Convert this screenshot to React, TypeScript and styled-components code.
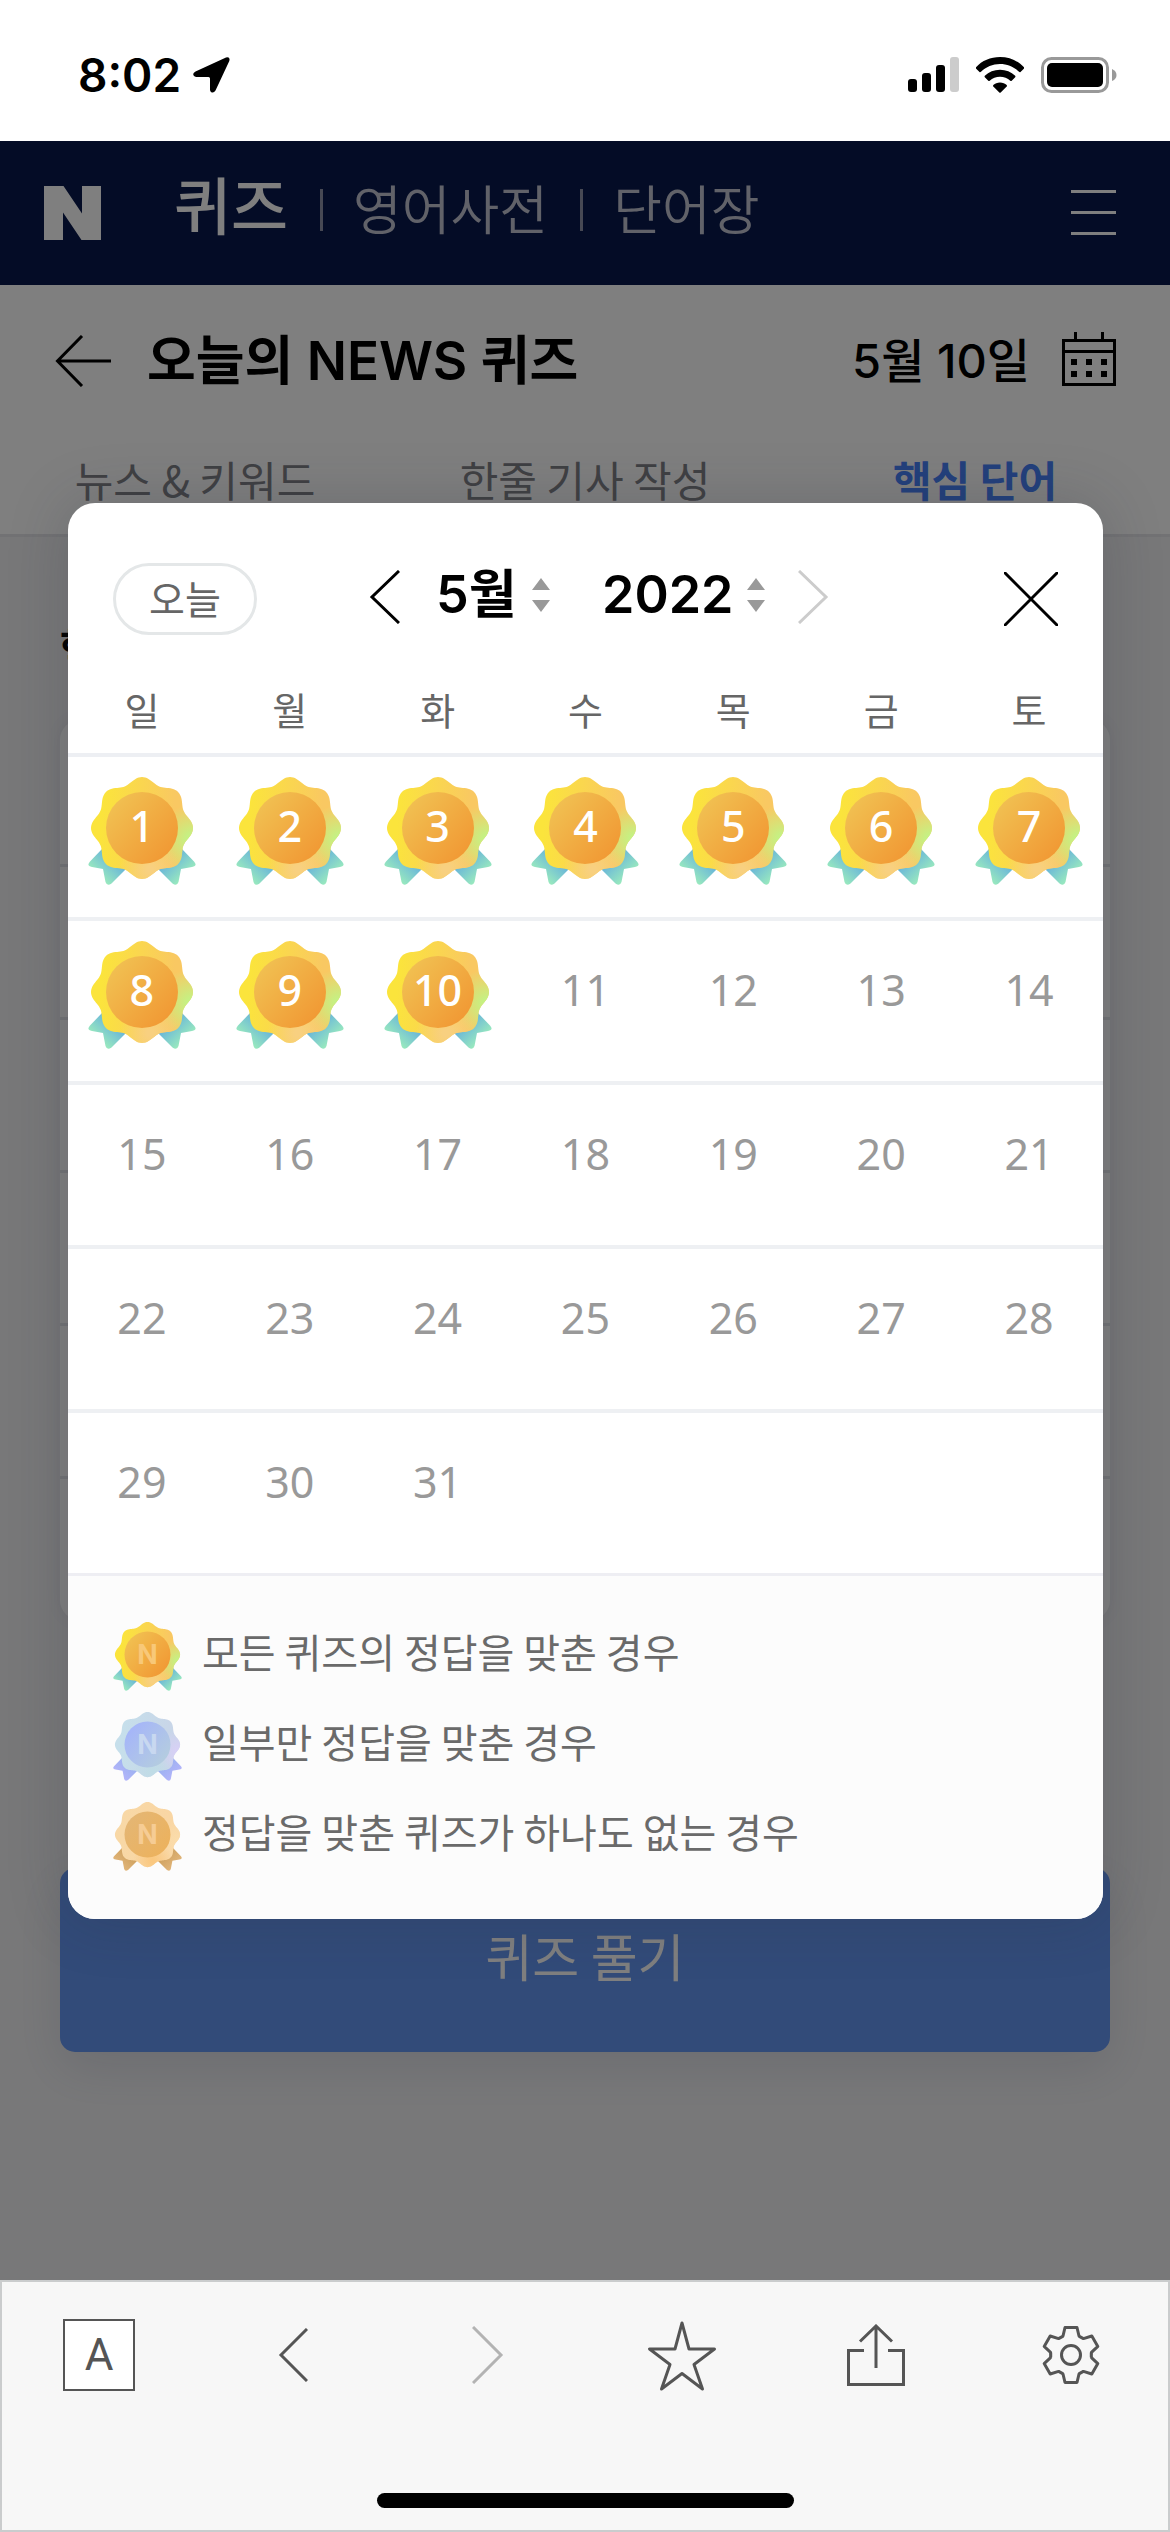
import React, { useId } from "react";
import styled, { createGlobalStyle } from "styled-components";

const GlobalStyle = createGlobalStyle`
  * { box-sizing: border-box; }
  body {
    margin: 0;
    background: #f7f7f7;
    font-family: Inter, "Noto Sans CJK KR", sans-serif;
    color: #000;
  }
  button, select {
    font: inherit;
    color: inherit;
    background: none;
    border: 0;
    margin: 0;
    padding: 0;
    cursor: pointer;
  }
  a { color: inherit; text-decoration: none; }
  svg { display: block; }
`;

const Screen = styled.div`
  display: flex;
  flex-direction: column;
  min-height: 100vh;
`;

/* ---------- status bar ---------- */

const StatusBar = styled.div`
  display: flex;
  align-items: center;
  justify-content: space-between;
  height: 141px;
  padding: 8px 53px 0 78px;
  background: #fff;
`;

const Clock = styled.div`
  display: flex;
  align-items: center;
  gap: 12px;
  font-size: 46px;
  line-height: 56px;
  font-weight: 600;
`;

const StatusIcons = styled.div`
  display: flex;
  align-items: center;
  gap: 17px;
`;

/* ---------- web page ---------- */

const WebView = styled.div`
  position: relative;
  flex: 1;
  display: flex;
  flex-direction: column;
  background: #f1f1f3;
`;

const SiteHeader = styled.header`
  display: flex;
  align-items: center;
  height: 144px;
  padding: 0 54px 0 44px;
  background: #09194c;
  color: #fff;
`;

const SiteNav = styled.nav`
  display: flex;
  align-items: center;
  flex: 1;
  padding-left: 73px;
  padding-bottom: 6px;
  font-family: "Noto Sans CJK KR", sans-serif;
`;

const NavLink = styled.a<{ $current?: boolean }>`
  font-size: ${(p) => (p.$current ? 62 : 53)}px;
  line-height: 76px;
  font-weight: ${(p) => (p.$current ? 500 : 350)};
  color: ${(p) => (p.$current ? "#fff" : "#c2c4d2")};
  padding-bottom: ${(p) => (p.$current ? 14 : 6)}px;
`;

const NavDivider = styled.span`
  width: 3px;
  height: 42px;
  margin: 0 30px 0 32px;
  background: #8f93a8;
`;

const TitleBar = styled.div`
  display: flex;
  align-items: center;
  gap: 36px;
  height: 152px;
  padding: 0 54px 0 55px;
  background: #fff;
`;

const PageTitle = styled.h1`
  flex: 1;
  margin: 0;
  font-size: 53px;
  line-height: 64px;
  font-weight: 600;
`;

const DateButton = styled.button`
  display: flex;
  align-items: center;
  gap: 32px;
  font-size: 47px;
  line-height: 64px;
  font-weight: 500;
`;

const Tabs = styled.nav`
  display: grid;
  grid-template-columns: repeat(3, 1fr);
  height: 100px;
  padding-top: 12px;
  background: #fff;
  border-bottom: 3px solid #e4e5e8;
  font-family: "Noto Sans CJK KR", sans-serif;
`;

const Tab = styled.a<{ $current?: boolean }>`
  font-size: 42px;
  line-height: 60px;
  text-align: center;
  font-weight: ${(p) => (p.$current ? 700 : 400)};
  color: ${(p) => (p.$current ? "#4680f8" : "#7e8086")};
`;

const PageBody = styled.main`
  flex: 1;
  padding: 82px 60px 0;
`;

const SectionTitle = styled.h2`
  margin: 0 0 41px;
  font-size: 42px;
  line-height: 60px;
  font-weight: 700;
`;

const WordCard = styled.ul`
  list-style: none;
  margin: 0 0 248px;
  padding: 0;
  background: #fff;
  border-radius: 20px;
  box-shadow: 0 0 20px rgba(60, 70, 110, 0.08);
`;

const WordRow = styled.li`
  height: 153px;
  border-bottom: 3px solid #e4e6ea;
  &:first-child { height: 147px; }
  &:last-child { height: 141px; border-bottom: 0; }
`;

const StartButton = styled.button`
  width: 100%;
  height: 184px;
  border-radius: 15px;
  background: #6496f2;
  color: #fff;
  font-family: "Noto Sans CJK KR", sans-serif;
  font-size: 51px;
  font-weight: 400;
  line-height: 64px;
  padding-bottom: 10px;
  box-shadow: 0 16px 50px rgba(40, 60, 110, 0.12);
`;

/* ---------- calendar dialog ---------- */

const Overlay = styled.div`
  position: absolute;
  inset: 0;
  display: flex;
  align-items: center;
  padding: 0 67px 0 68px;
  background: rgba(0, 0, 0, 0.5);
`;

const Dialog = styled.section`
  flex: 1;
  overflow: hidden;
  border-radius: 27px;
  background: #fff;
  box-shadow: 0 0 60px rgba(40, 44, 60, 0.22);
`;

const DialogHeader = styled.div`
  display: flex;
  align-items: center;
  padding: 60px 45px 32px;
`;

const TodayButton = styled.button`
  width: 144px;
  height: 72px;
  border: 3px solid #e4e7e8;
  border-radius: 36px;
  padding-bottom: 4px;
  font-family: "Noto Sans CJK KR", sans-serif;
  font-size: 39px;
  line-height: 60px;
  color: #666;
`;

const MonthNav = styled.div`
  display: flex;
  align-items: center;
  flex: 1;
  padding-left: 112px;
  padding-bottom: 4px;
`;

const Picker = styled.label<{ $wide?: boolean }>`
  display: flex;
  align-items: center;
  padding-bottom: 4px;
  margin-left: ${(p) => (p.$wide ? 52 : 36)}px;
  margin-right: ${(p) => (p.$wide ? 33 : 0)}px;
  select {
    appearance: none;
    width: ${(p) => (p.$wide ? 145 : 96)}px;
    font-size: 52px;
    line-height: 64px;
    height: 64px;
    font-weight: 600;
  }
`;

const Calendar = styled.table`
  width: 100%;
  table-layout: fixed;
  border-collapse: separate;
  border-spacing: 0;
  font-family: "Noto Sans CJK KR", sans-serif;
`;

const Weekday = styled.th`
  height: 90px;
  padding: 0 0 2px;
  border-bottom: 4px solid #edeff3;
  font-size: 38px;
  line-height: 60px;
  font-weight: 400;
  color: #666;
`;

const DayCell = styled.td<{ $last?: boolean }>`
  height: ${(p) => (p.$last ? 160 : 164)}px;
  padding: 20px 0 0;
  vertical-align: top;
  border-bottom: ${(p) => (p.$last ? "0" : "4px solid #eef0f3")};
`;

const DayButton = styled.button<{ $done?: boolean }>`
  display: grid;
  width: 108px;
  height: 108px;
  margin: 0 auto;
  font-family: "Noto Sans", sans-serif;
  font-size: 43px;
  line-height: 98px;
  color: ${(p) => (p.$done ? "#fff" : "#999")};
  font-weight: ${(p) => (p.$done ? 500 : 400)};
  > * { grid-area: 1 / 1; }
  > span { z-index: 1; }
`;

const Legend = styled.ul`
  display: grid;
  gap: 21px;
  list-style: none;
  margin: 0;
  padding: 46px 45px 48px;
  background: #fcfcfc;
  border-top: 3px solid #eeeef3;
  font-family: "Noto Sans CJK KR", sans-serif;
`;

const LegendItem = styled.li`
  display: flex;
  align-items: center;
  gap: 20px;
  height: 69px;
  font-size: 40px;
  line-height: 60px;
  color: #6a6a6a;
  span { padding-bottom: 10px; }
`;

/* ---------- browser toolbar ---------- */

const Toolbar = styled.footer`
  display: flex;
  flex-direction: column;
  align-items: center;
  height: 252px;
  border: 2px solid #cacccd;
  background: #f7f7f7;
`;

const Tools = styled.div`
  display: grid;
  grid-template-columns: repeat(6, 1fr);
  align-items: center;
  width: 100%;
  height: 146px;
  color: #555;
`;

const Tool = styled.button`
  display: flex;
  align-items: center;
  justify-content: center;
  height: 146px;
  &:disabled { color: #b3b3b3; }
`;

const LetterBox = styled.span`
  width: 72px;
  height: 72px;
  border: 2px solid #555;
  background: #fff;
  font-family: Roboto, sans-serif;
  font-size: 44px;
  line-height: 68px;
`;

const HomeIndicator = styled.div`
  width: 417px;
  height: 15px;
  margin: auto 0 22px;
  border-radius: 8px;
  background: #000;
`;

/* ---------- medal drawing ---------- */

type Palette = {
  left: string;
  right: string;
  glow: string;
  base: string;
  inner: [string, string];
  ribbon: [string, string];
  mark: string;
};

const gold: Palette = {
  left: "#fbe43c",
  right: "#f9c862",
  glow: "#c4f284",
  base: "#f8d080",
  inner: ["#f1c152", "#f19a35"],
  ribbon: ["#68b4da", "#98e8bf"],
  mark: "#f8c878",
};

const blue: Palette = {
  left: "#c6dfeb",
  right: "#c8d6e8",
  glow: "#d8d0f6",
  base: "#c0dce6",
  inner: ["#a4b4fa", "#b4cce0"],
  ribbon: ["#9cb2f0", "#b2b4fa"],
  mark: "#c8d8f0",
};

const bronze: Palette = {
  left: "#f8d8a6",
  right: "#f9d6a4",
  glow: "#fbdcaa",
  base: "#fac880",
  inner: ["#e4b674", "#ecb25e"],
  ribbon: ["#cfa260", "#e0b478"],
  mark: "#f6cc94",
};

const scallop = (() => {
  const points: string[] = [];
  for (let i = 0; i < 192; i++) {
    const a = (i / 192) * Math.PI * 2;
    const r = 48 + 3 * Math.cos(8 * a);
    points.push(`${(54 + r * Math.sin(a)).toFixed(2)} ${(51 - r * Math.cos(a)).toFixed(2)}`);
  }
  return `M${points.join("L")}Z`;
})();

const ribbon = "M14 72L2 84.500Q-2 89 4 90L15 92L17.500 105Q19 109.500 23.500 106.500L42 88Z";

function Medal({ size, palette, mark }: { size: number; palette: Palette; mark?: boolean }) {
  const id = useId().replace(/[^a-zA-Z0-9]/g, "");
  return (
    <svg width={size} height={size} viewBox="0 0 108 108" aria-hidden="true">
      <defs>
        <linearGradient id={`${id}a`} x1="0" y1="0.4" x2="1" y2="0.5">
          <stop offset="0.1" stopColor={palette.left} />
          <stop offset="0.8" stopColor={palette.right} />
        </linearGradient>
        <radialGradient id={`${id}b`} gradientUnits="userSpaceOnUse" cx="103" cy="62" r="34">
          <stop offset="0.1" stopColor={palette.glow} />
          <stop offset="1" stopColor={palette.glow} stopOpacity="0" />
        </radialGradient>
        <radialGradient id={`${id}c`} gradientUnits="userSpaceOnUse" cx="62" cy="92" r="30">
          <stop offset="0.1" stopColor={palette.base} />
          <stop offset="1" stopColor={palette.base} stopOpacity="0" />
        </radialGradient>
        <linearGradient id={`${id}d`} x1="0.1" y1="0.1" x2="0.9" y2="0.8">
          <stop offset="0" stopColor={palette.inner[0]} />
          <stop offset="1" stopColor={palette.inner[1]} />
        </linearGradient>
        <linearGradient id={`${id}e`} gradientUnits="userSpaceOnUse" x1="25" y1="80" x2="9" y2="97">
          <stop offset="0" stopColor={palette.ribbon[0]} />
          <stop offset="1" stopColor={palette.ribbon[1]} />
        </linearGradient>
      </defs>
      <path d={ribbon} fill={`url(#${id}e)`} />
      <path d={ribbon} fill={`url(#${id}e)`} transform="translate(108 0) scale(-1 1)" />
      <path d={scallop} fill={`url(#${id}a)`} />
      <path d={scallop} fill={`url(#${id}b)`} />
      <path d={scallop} fill={`url(#${id}c)`} />
      <circle cx="54" cy="51" r="36" fill={`url(#${id}d)`} />
      {mark && (
        <text
          x="54"
          y="66"
          textAnchor="middle"
          fontFamily="Inter, sans-serif"
          fontWeight="700"
          fontSize="42"
          fill={palette.mark}
        >
          N
        </text>
      )}
    </svg>
  );
}

/* ---------- icons ---------- */

const Chevron = ({ w, h, flip }: { w: number; h: number; flip?: boolean }) => (
  <svg width={w} height={h} fill="none" stroke="currentColor" strokeWidth="3" aria-hidden="true">
    <path d={flip ? `M1 1L${w - 3} ${h / 2}L1 ${h - 1}` : `M${w - 1} 1L3 ${h / 2}L${w - 1} ${h - 1}`} />
  </svg>
);

const Stepper = () => (
  <svg width="18" height="34" viewBox="0 0 18 34" fill="#999" aria-hidden="true">
    <path d="M9 0L18 12H0ZM9 34L18 22H0Z" />
  </svg>
);

const gearPath = (() => {
  const tooth: [number, number][] = [
    [-12, -16.5],
    [-8, -19],
    [-6, -27.5],
    [6, -27.5],
    [8, -19],
    [12, -16.5],
  ];
  const points: string[] = [];
  for (let k = 0; k < 6; k++) {
    const t = (k * Math.PI) / 3;
    const cos = Math.cos(t);
    const sin = Math.sin(t);
    tooth.forEach(([x, y]) => {
      points.push(`${(29 + x * cos - y * sin).toFixed(2)} ${(29 + x * sin + y * cos).toFixed(2)}`);
    });
  }
  return `M${points.join("L")}Z`;
})();

const NextMonthButton = styled.button`
  &:disabled { color: #ccc; cursor: default; }
`;

/* ---------- data ---------- */

const weekdays = ["일", "월", "화", "수", "목", "금", "토"];
const weeks = [0, 1, 2, 3, 4].map((w) => weekdays.map((_, d) => w * 7 + d + 1));
const lastDay = 31;
const today = 10;

const legend: [Palette, string][] = [
  [gold, "모든 퀴즈의 정답을 맞춘 경우"],
  [blue, "일부만 정답을 맞춘 경우"],
  [bronze, "정답을 맞춘 퀴즈가 하나도 없는 경우"],
];

export default function App() {
  return (
    <Screen>
      <GlobalStyle />
      <StatusBar>
        <Clock>
          8:02
          <svg width="37" height="36" viewBox="0 0 37 36" aria-hidden="true">
            <path d="M33 .5Q37.500-.5 36.300 4L22.500 33.500Q20.500 36.500 18 35Q17 34 17 32.500V21.500Q17 20 15.500 20H3Q0 19.500 .2 17Q.5 15.500 2.500 14.500Z" />
          </svg>
        </Clock>
        <StatusIcons>
          <svg width="51" height="35" viewBox="0 0 51 35" aria-hidden="true">
            <rect x="0" y="22" width="9" height="13" rx="3" />
            <rect x="14" y="16" width="9" height="19" rx="3" />
            <rect x="28" y="8" width="9" height="27" rx="3" />
            <rect x="42" y="0" width="9" height="35" rx="3" fill="#ccc" />
          </svg>
          <svg width="48" height="36" viewBox="0 0 48 36" aria-hidden="true">
            <path d="M24 0C33.500 0 42 3.700 48 10.200Q48.500 11 47.800 11.700L44.500 15Q43.800 15.500 43 14.800C38 9.800 31.300 7 24 7S10 9.800 5 14.800Q4.200 15.500 3.500 15L.2 11.700Q-.5 11 0 10.200C6 3.700 14.500 0 24 0Z" />
            <path d="M24 12.800C29.900 12.800 35.200 15 39.200 18.800Q39.800 19.500 39.200 20.200L35.700 23.700Q35 24.300 34.300 23.700C31.500 21.200 28 19.700 24 19.700S16.500 21.200 13.700 23.700Q13 24.300 12.300 23.700L8.800 20.200Q8.200 19.500 8.800 18.800C12.800 15 18.100 12.800 24 12.800Z" />
            <path d="M24 25.500C26.700 25.500 29 26.400 30.700 28Q31.300 28.700 30.700 29.400L24.700 35.400Q24 36 23.300 35.400L17.300 29.400Q16.700 28.700 17.300 28C19 26.400 21.300 25.500 24 25.500Z" />
          </svg>
          <svg width="76" height="36" viewBox="0 0 76 36" aria-hidden="true">
            <rect x="1.500" y="1.500" width="65" height="33" rx="9" fill="none" stroke="#999" strokeWidth="3" />
            <rect x="6" y="6" width="56" height="24" rx="5" />
            <path d="M71 12Q75.500 14 75.500 18T71 24Z" fill="#999" />
          </svg>
        </StatusIcons>
      </StatusBar>

      <WebView>
        <SiteHeader>
          <a href="#home" aria-label="Naver">
            <svg width="57" height="54" viewBox="0 0 57 54" fill="currentColor" aria-hidden="true">
              <path d="M0 0H19.500L38 27.500V0H57V54H37.500L19 26.500V54H0Z" />
            </svg>
          </a>
          <SiteNav>
            <NavLink href="#quiz" $current>퀴즈</NavLink>
            <NavDivider />
            <NavLink href="#dict">영어사전</NavLink>
            <NavDivider />
            <NavLink href="#words">단어장</NavLink>
          </SiteNav>
          <button type="button" aria-label="메뉴">
            <svg width="45" height="46" viewBox="0 0 45 46" fill="none" stroke="#fff" strokeWidth="3" aria-hidden="true">
              <path d="M0 1.500H45M0 22.500H45M0 43.500H45" />
            </svg>
          </button>
        </SiteHeader>

        <TitleBar>
          <button type="button" aria-label="뒤로">
            <svg width="56" height="52" viewBox="0 0 56 52" fill="none" stroke="currentColor" strokeWidth="3" aria-hidden="true">
              <path d="M27 1L2.500 26L27 51M2 26H56" />
            </svg>
          </button>
          <PageTitle>오늘의 NEWS 퀴즈</PageTitle>
          <DateButton type="button">
            5월 10일
            <svg width="54" height="58" viewBox="0 0 54 58" aria-hidden="true">
              <path d="M1.500 8.500H52.500V52.500H1.500ZM1.500 19.500H52.500M13.500 0V8M40.500 0V8" fill="none" stroke="#000" strokeWidth="3" />
              <path d="M9 27h6v6h-6zM24 27h6v6h-6zM39 27h6v6h-6zM9 39h6v6h-6zM24 39h6v6h-6zM39 39h6v6h-6z" />
            </svg>
          </DateButton>
        </TitleBar>

        <Tabs>
          <Tab href="#news">뉴스 &amp; 키워드</Tab>
          <Tab href="#article">한줄 기사 작성</Tab>
          <Tab href="#key" $current>핵심 단어</Tab>
        </Tabs>

        <PageBody>
          <SectionTitle>핵심 단어</SectionTitle>
          <WordCard>
            {[1, 2, 3, 4, 5, 6].map((n) => (
              <WordRow key={n} />
            ))}
          </WordCard>
          <StartButton type="button">퀴즈 풀기</StartButton>
        </PageBody>

        <Overlay>
          <Dialog role="dialog" aria-label="달력">
            <DialogHeader>
              <TodayButton type="button">오늘</TodayButton>
              <MonthNav>
                <button type="button" aria-label="이전 달">
                  <Chevron w={31} h={54} />
                </button>
                <Picker>
                  <select aria-label="월" defaultValue="5">
                    {Array.from({ length: 12 }, (_, i) => (
                      <option key={i} value={i + 1}>{`${i + 1}월`}</option>
                    ))}
                  </select>
                  <Stepper />
                </Picker>
                <Picker $wide>
                  <select aria-label="연도" defaultValue="2022">
                    <option>2021</option>
                    <option>2022</option>
                  </select>
                  <Stepper />
                </Picker>
                <NextMonthButton type="button" aria-label="다음 달" disabled>
                  <Chevron w={31} h={54} flip />
                </NextMonthButton>
              </MonthNav>
              <button type="button" aria-label="닫기">
                <svg width="54" height="54" fill="none" stroke="currentColor" strokeWidth="3" aria-hidden="true">
                  <path d="M0 0L54 54M54 0L0 54" />
                </svg>
              </button>
            </DialogHeader>

            <Calendar>
              <thead>
                <tr>
                  {weekdays.map((d) => (
                    <Weekday key={d} scope="col">{d}</Weekday>
                  ))}
                </tr>
              </thead>
              <tbody>
                {weeks.map((week, w) => (
                  <tr key={w}>
                    {week.map((day) => (
                      <DayCell key={day} $last={w === weeks.length - 1}>
                        {day <= lastDay && (
                          <DayButton type="button" $done={day <= today}>
                            {day <= today && <Medal size={108} palette={gold} />}
                            <span>{day}</span>
                          </DayButton>
                        )}
                      </DayCell>
                    ))}
                  </tr>
                ))}
              </tbody>
            </Calendar>

            <Legend>
              {legend.map(([palette, label]) => (
                <LegendItem key={label}>
                  <Medal size={69} palette={palette} mark />
                  <span>{label}</span>
                </LegendItem>
              ))}
            </Legend>
          </Dialog>
        </Overlay>
      </WebView>

      <Toolbar>
        <Tools>
          <Tool type="button" aria-label="앱"><LetterBox>A</LetterBox></Tool>
          <Tool type="button" aria-label="이전"><Chevron w={30} h={54} /></Tool>
          <Tool type="button" aria-label="다음" disabled><Chevron w={32} h={58} flip /></Tool>
          <Tool type="button" aria-label="즐겨찾기">
            <svg width="70" height="76" viewBox="0 0 70 76" fill="none" stroke="currentColor" strokeWidth="3" strokeLinejoin="round" aria-hidden="true">
              <path d="M35 6L42 32H67.500L47 47.500L55.500 72L35 56.500L14.500 72L23 47.500L2.500 32H28Z" />
            </svg>
          </Tool>
          <Tool type="button" aria-label="공유">
            <svg width="58" height="62" viewBox="0 0 58 62" fill="none" stroke="currentColor" strokeWidth="3" aria-hidden="true">
              <path d="M17 26.500H1.500V60.500H56.500V26.500H41M29 44V2M13 17.500L29 2L45 17.500" />
            </svg>
          </Tool>
          <Tool type="button" aria-label="설정">
            <svg width="58" height="58" viewBox="0 0 58 58" fill="none" stroke="currentColor" strokeWidth="3" strokeLinejoin="round" aria-hidden="true">
              <path d={gearPath} />
              <circle cx="29" cy="29" r="9.500" />
            </svg>
          </Tool>
        </Tools>
        <HomeIndicator />
      </Toolbar>
    </Screen>
  );
}
